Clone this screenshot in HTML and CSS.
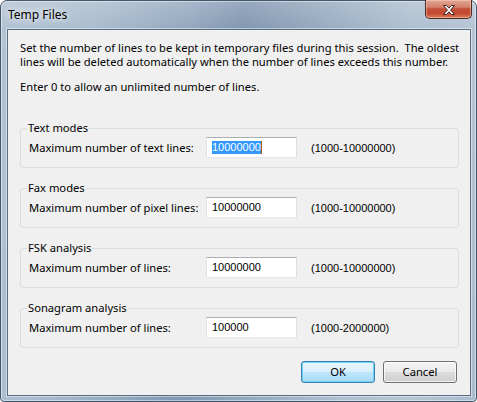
FILE: index.html
```html
<!DOCTYPE html>
<html>
<head>
<meta charset="utf-8">
<link rel="stylesheet" href="styles.css">
</head>
<body>
<div class="window">
  <div class="titlebar">
    <span class="title">Temp Files</span>
    <div class="close">
      <svg width="16" height="12" viewBox="0 0 16 12">
        <path d="M2.5 1.5 L5.5 1.5 L8 4.2 L10.5 1.5 L13.5 1.5 L9.6 6 L13.5 10.5 L10.5 10.5 L8 7.8 L5.5 10.5 L2.5 10.5 L6.4 6 Z" fill="#ffffff" stroke="#3b2722" stroke-width="1" stroke-linejoin="round"/>
      </svg>
    </div>
  </div>
  <div class="client">
    <p class="intro">Set the number of lines to be kept in temporary files during this session.  The oldest<br>lines will be deleted automatically when the number of lines exceeds this number.</p>
    <p class="intro second">Enter 0 to allow an unlimited number of lines.</p>

    <fieldset class="group">
      <legend>Text modes</legend>
      <div class="row">
        <span class="label">Maximum number of text lines:</span>
        <span class="field"><span class="sel">10000000</span></span>
        <span class="range">(1000-10000000)</span>
      </div>
    </fieldset>

    <fieldset class="group">
      <legend>Fax modes</legend>
      <div class="row">
        <span class="label">Maximum number of pixel lines:</span>
        <span class="field">10000000</span>
        <span class="range">(1000-10000000)</span>
      </div>
    </fieldset>

    <fieldset class="group">
      <legend>FSK analysis</legend>
      <div class="row">
        <span class="label">Maximum number of lines:</span>
        <span class="field">10000000</span>
        <span class="range">(1000-10000000)</span>
      </div>
    </fieldset>

    <fieldset class="group">
      <legend>Sonagram analysis</legend>
      <div class="row">
        <span class="label">Maximum number of lines:</span>
        <span class="field">100000</span>
        <span class="range">(1000-2000000)</span>
      </div>
    </fieldset>

    <div class="buttons">
      <button class="btn default">OK</button>
      <button class="btn">Cancel</button>
    </div>
  </div>
</div>
</body>
</html>
```
FILE: styles.css
```css
html, body {
  margin: 0;
  padding: 0;
  background: #ffffff;
}
body {
  width: 477px;
  height: 402px;
  overflow: hidden;
  font-family: "Noto Sans", "Open Sans", sans-serif;
  font-size: 11.2px;
  color: #000;
}
.window {
  box-sizing: border-box;
  width: 477px;
  height: 402px;
  border: 1px solid #44576b;
  border-radius: 7px 7px 4px 4px;
  background:
    linear-gradient(180deg, rgba(255,255,255,0.18) 0px, rgba(255,255,255,0) 28px),
    linear-gradient(100deg, #b3c3d4 0%, #aabcce 18%, #93a8bf 35%, #8197b0 45%, #94a9bf 58%, #aebfd0 75%, #b6c5d5 88%, #a9bbcd 100%);
  display: flex;
  flex-direction: column;
  box-shadow: inset 0 0 0 1px rgba(255,255,255,0.45);
}
.titlebar {
  height: 28px;
  display: flex;
  align-items: flex-start;
  padding: 0 4px 0 7px;
}
.title {
  margin-top: 6px;
  font-size: 12px;
  line-height: 16px;
  color: #000;
  text-shadow: 0 0 6px rgba(255,255,255,0.95), 0 0 10px rgba(255,255,255,0.8);
}
.close {
  margin-left: auto;
  margin-top: -1px;
  width: 47px;
  height: 19px;
  box-sizing: border-box;
  border: 1px solid #4d2b24;
  border-top: none;
  border-radius: 0 0 5px 5px;
  background: linear-gradient(180deg, #e3a694 0%, #d4806d 40%, #c24e38 50%, #c64a30 75%, #d9805c 100%);
  box-shadow: inset 0 0 0 1px rgba(255,220,200,0.45);
  display: flex;
  align-items: center;
  justify-content: center;
}
.close svg { display: block; margin-top: 1px; }
.client {
  flex: 1;
  margin: 0 5px 5px 6px;
  background: #f0f0f0;
  border: 1px solid #5b6d80;
  box-shadow: 0 0 0 1px rgba(255,255,255,0.45);
  padding: 11px 12px 11px 12px;
  display: flex;
  flex-direction: column;
}
.intro {
  margin: 0;
  line-height: 14px;
  white-space: pre;
}
.intro.second {
  margin-top: 11px;
  margin-bottom: 27px;
}
.group {
  margin: 0 -1px 13px 0;
  padding: 2px 8px 9px 8px;
  border: 1px solid #d5dfe5;
  border-radius: 3px;
  min-width: 0;
}
.group legend {
  padding: 0 1px;
  margin-left: -2px;
  line-height: 14px;
}
.row {
  display: flex;
  align-items: center;
  height: 21px;
}
.label {
  width: 177px;
  flex: none;
  white-space: nowrap;
}
.field {
  box-sizing: border-box;
  width: 91px;
  height: 21px;
  background: #fff;
  border: 1px solid #abadb3;
  border-color: #abadb3 #dbdfe6 #e3e9ef #e2e3ea;
  padding-left: 5px;
  font-family: "Liberation Sans", Arial, sans-serif;
  font-size: 11px;
  line-height: 19px;
  display: flex;
  align-items: center;
}
.sel {
  background: #3399ff;
  color: #fff;
  line-height: 13px;
  border-right: 1px solid #b05a10;
}
.range {
  margin-left: 14px;
  font-family: "Liberation Sans", Arial, sans-serif;
  font-size: 11px;
}
.buttons {
  display: flex;
  justify-content: flex-end;
  gap: 8px;
  padding-right: 1px;
}
.btn {
  box-sizing: border-box;
  width: 74px;
  height: 22px;
  font-family: "Noto Sans", "Open Sans", sans-serif;
  font-size: 11.2px;
  color: #000;
  border: 1px solid #707070;
  border-radius: 3px;
  background: linear-gradient(180deg, #f2f2f2 0%, #ebebeb 48%, #dddddd 52%, #cfcfcf 100%);
  box-shadow: inset 0 0 0 1px rgba(255,255,255,0.7);
  padding: 0;
  line-height: 18px;
}
.btn.default {
  border-color: #3c7fb1;
  background: linear-gradient(180deg, #eaf6fd 0%, #d9f0fc 48%, #bee6fd 52%, #a7d9f5 100%);
  box-shadow: inset 0 0 0 1px #6fd3f7;
}
```
